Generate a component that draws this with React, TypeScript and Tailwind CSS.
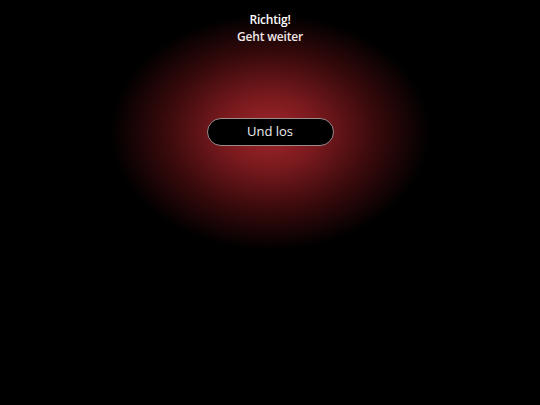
export default function App() {
  return (
    <div
      className="relative w-[540px] h-[405px] bg-black overflow-hidden"
      style={{ fontFamily: '"Open Sans", "Noto Sans", sans-serif' }}
    >
      <div className="absolute left-0 top-0 w-[540px] h-[405px] bg-[radial-gradient(ellipse_160px_118px_at_270px_132px,#a0262a_0%,#7a1a1e_30%,#3a0a0c_65%,#000_100%)]" />
      <div className="relative flex flex-col items-center pt-[11px]">
        <div className="text-[12px] font-semibold text-white leading-[17px] tracking-[-0.2px]">Richtig!</div>
        <div className="text-[12px] font-semibold text-[#f0e8e8] leading-[17px] tracking-[-0.2px]">Geht weiter</div>
        <button className="mt-[73px] w-[127px] h-[28px] rounded-full bg-black border border-[#9a8a8a] text-[13px] text-[#eeeeee] flex items-center justify-center">
          Und los
        </button>
      </div>
    </div>
  );
}
